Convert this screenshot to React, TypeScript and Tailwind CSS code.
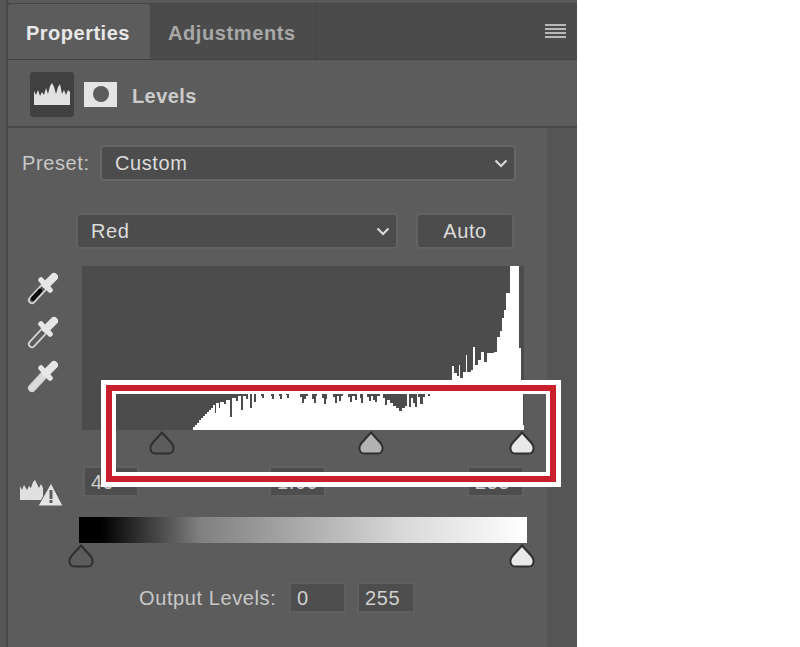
import React from 'react';

// histogram top edge as [x, y] steps, in panel pixels
const edge: [number, number][] = [
  [191, 430], [193, 427], [195, 425], [197, 423], [199, 420], [201, 418], [203, 416], [205, 414], [207, 412], [209, 410],
  [211, 408], [213, 405], [215, 413], [216, 403], [219, 408], [220, 402], [224, 404], [226, 400], [230, 417], [232, 398],
  [236, 401], [238, 396], [241, 410], [243, 396], [246, 399], [248, 394], [250, 408], [252, 394], [254, 402], [256, 392],
  [261, 396], [262, 398], [264, 390], [271, 396], [272, 399], [274, 390], [279, 396], [280, 399], [282, 390], [286, 395],
  [287, 398], [289, 390], [300, 397], [302, 403], [304, 399], [306, 396], [308, 390], [312, 399], [314, 403], [316, 396],
  [317, 390], [322, 398], [324, 404], [326, 399], [327, 390], [333, 397], [335, 403], [337, 396], [339, 401], [341, 396],
  [343, 390], [348, 397], [350, 402], [352, 396], [355, 400], [357, 390], [360, 398], [361, 403], [363, 390], [367, 397],
  [369, 401], [371, 396], [373, 400], [375, 402], [377, 396], [380, 390], [383, 398], [385, 405], [387, 400], [390, 403],
  [393, 406], [396, 408], [399, 411], [402, 408], [405, 406], [407, 394], [409, 407], [411, 398], [413, 403], [415, 407],
  [417, 394], [418, 397], [420, 404], [423, 397], [425, 394], [428, 396], [430, 390], [452, 366], [454, 373], [457, 376],
  [459, 365], [460, 378], [463, 372], [466, 355], [467, 372], [471, 370], [473, 347], [475, 365], [478, 360], [481, 352],
  [484, 362], [487, 353], [494, 352], [497, 337], [500, 331], [502, 318], [504, 310], [506, 293], [510, 266], [519, 348],
  [521, 394], [523, 425], [525, 430],
];

const histogramPath = () => {
  let d = 'M109 164';
  edge.forEach(([x, y], i) => {
    const next = i < edge.length - 1 ? edge[i + 1][0] : x;
    d += ` H${x - 82} V${y - 266} H${next - 82}`;
  });
  return d + ' V164 Z';
};

const Chevron = () => (
  <svg width="14" height="9" viewBox="0 0 14 9" className="shrink-0 mr-[1px]">
    <path d="M1.5 1.5 L7 7 L12.5 1.5" fill="none" stroke="#d8d8d8" strokeWidth="2.2" />
  </svg>
);

const Thumb = ({ fill, className }: { fill: string; className: string }) => (
  <svg width="26" height="24" viewBox="0 0 26 24" className={className}>
    <path
      d="M13 1.5 L22.5 12 Q25 15 24.5 18 Q24 22.5 19.5 22.5 H6.5 Q2 22.5 1.5 18 Q1 15 3.5 12 Z"
      fill={fill}
      stroke="#2f2f2f"
      strokeWidth="2"
    />
  </svg>
);

const Dropper = ({ tube, fill, body }: { tube: string; fill: string; body: string }) => (
  <svg width="32" height="34" viewBox="0 0 32 34">
    <path d="M6 28 L19 14" stroke="#d4d4d4" strokeWidth="8" strokeLinecap="round" />
    <path d="M6 28 L19 14" stroke={body} strokeWidth="4.5" strokeLinecap="round" />
    <path d="M7 26.5 L14 19" stroke={tube} strokeWidth={fill} strokeLinecap="round" />
    <path d="M20 13 L28 5" stroke="#e6e6e6" strokeWidth="8" strokeLinecap="round" />
    <path d="M15 8 L24 18" stroke="#e6e6e6" strokeWidth="5.5" strokeLinecap="round" />
  </svg>
);

const NumberBox = ({ value, className }: { value: string; className: string }) => (
  <div className={`h-[31px] bg-[#4d4d4d] border-2 border-[#606060] flex items-center pl-[6px] text-[20px] tracking-[0.6px] text-[#d0d0d0] ${className}`}>
    {value}
  </div>
);

export default function App() {
  return (
    <div className="relative w-[800px] h-[647px] bg-white flex font-['Liberation_Sans',Arial,sans-serif] overflow-hidden">
      <div className="w-[577px] h-full flex bg-[#5c5c5c]">
        <div className="w-[8px] bg-[#565656] border-r-2 border-[#474747]" />

        <div className="flex-1 flex flex-col min-w-0">
          <div className="h-[4px] bg-[#5a5a5a] border-b border-[#464646]" />

          {/* tabs */}
          <div className="h-[56px] bg-[#4b4b4b] border-b border-[#424242] flex items-stretch">
            <div className="w-[142px] bg-[#5c5c5c] rounded-t-[3px] flex items-center pl-[18px] pt-[2px] text-[20px] font-bold tracking-[0.5px] text-[#e8e8e8]">
              Properties
            </div>
            <div className="w-[167px] border-r border-[#434343] flex items-center pl-[18px] pt-[2px] text-[20px] font-bold tracking-[0.6px] text-[#a8a8a8]">
              Adjustments
            </div>
            <div className="flex-1 flex items-start justify-end pt-[20px] pr-[11px]">
              <div className="w-[21px] flex flex-col gap-[2px]">
                <div className="h-[2px] bg-[#b8b8b8]" />
                <div className="h-[2px] bg-[#b8b8b8]" />
                <div className="h-[2px] bg-[#b8b8b8]" />
                <div className="h-[2px] bg-[#b8b8b8]" />
              </div>
            </div>
          </div>

          {/* adjustment header */}
          <div className="h-[68px] border-b-2 border-[#494949] flex items-center pl-[22px] pt-[2px]">
            <div className="w-[44px] h-[45px] bg-[#404040] rounded-[3px] flex items-center justify-center">
              <svg width="38" height="24" viewBox="0 0 38 24">
                <path
                  d="M1 23 V9 L3 13 L5 8 L7 14 L9 10 L11 13 L13 6 L15 12 L17 4 L19 1 L21 5 L23 12 L25 5 L27 2 L29 12 L31 8 L33 13 L35 8 L37 10 V23 Z"
                  fill="#e2e2e2"
                />
              </svg>
            </div>
            <div className="ml-[10px] w-[33px] h-[25px] bg-[#e4e4e4] flex items-center justify-center">
              <div className="w-[16px] h-[16px] rounded-full bg-[#5c5c5c]" />
            </div>
            <span className="ml-[15px] pt-[3px] text-[20px] font-bold tracking-[0.4px] text-[#cccccc]">Levels</span>
          </div>

          <div className="flex-1 flex min-h-0">
            <div className="w-[539px] text-[#d4d4d4] text-[20px] tracking-[0.6px]">
              {/* preset */}
              <div className="mt-[17px] flex items-center pl-[14px]">
                <span className="w-[78px] text-[#c8c8c8]">Preset:</span>
                <div className="w-[416px] h-[36px] bg-[#4c4c4c] border-2 border-[#666666] rounded-[4px] flex items-center justify-between pl-[13px] pr-[5px] text-[#dcdcdc]">
                  <span>Custom</span>
                  <Chevron />
                </div>
              </div>

              {/* channel */}
              <div className="mt-[32px] flex items-center pl-[68px]">
                <div className="w-[322px] h-[36px] bg-[#4c4c4c] border-2 border-[#626262] rounded-[4px] flex items-center justify-between pl-[13px] pr-[5px] text-[#dcdcdc]">
                  <span>Red</span>
                  <Chevron />
                </div>
                <div className="ml-[18px] w-[98px] h-[36px] bg-[#4c4c4c] border-2 border-[#626262] rounded-[4px] flex items-center justify-center text-[#dcdcdc]">
                  Auto
                </div>
              </div>

              {/* histogram */}
              <div className="mt-[17px] flex pl-[18px]">
                <div className="w-[32px] pt-[6px] flex flex-col gap-[10px]">
                  <Dropper tube="#0a0a0a" fill="4.5" body="#5c5c5c" />
                  <Dropper tube="#6a6a6a" fill="0" body="#5c5c5c" />
                  <Dropper tube="#4a4a4a" fill="0" body="#dcdcdc" />
                </div>
                <div className="ml-[24px] w-[442px] h-[164px] bg-[#4c4c4c]">
                  <svg width="442" height="164" viewBox="0 0 442 164">
                    <path d={histogramPath()} fill="#ffffff" />
                  </svg>
                </div>
              </div>

              <div className="relative h-[36px]">
                <Thumb fill="#5c5c5c" className="absolute left-[141px] top-[1px]" />
                <Thumb fill="#b2b2b2" className="absolute left-[350px] top-[1px]" />
                <Thumb fill="#e8e8e8" className="absolute left-[501px] top-[1px]" />
              </div>

              {/* input levels */}
              <div className="h-[31px] flex items-start pl-[11px]">
                <svg width="45" height="27" viewBox="0 0 45 27" className="mt-[14px] shrink-0">
                  <path d="M1 20 V6 L3 10 L5 5 L8 10 L10 6 L12 8 L14 2 L16 0 L18 4 L20 8 L22 4 L24 8 V20 Z" fill="#e0e0e0" />
                  <path d="M32 3 L44 26 H19 Z" fill="#e4e4e4" stroke="#5c5c5c" strokeWidth="1" />
                  <rect x="30.5" y="10" width="3" height="9" fill="#5c5c5c" />
                  <rect x="30.5" y="20" width="3" height="3" fill="#5c5c5c" />
                </svg>
                <NumberBox value="49" className="ml-[19px] w-[56px]" />
                <NumberBox value="1.00" className="ml-[130px] w-[57px]" />
                <NumberBox value="255" className="ml-[141px] w-[57px]" />
              </div>

              {/* output */}
              <div className="mt-[20px] ml-[71px] w-[448px] h-[26px] bg-[linear-gradient(90deg,#000_5%,#555_20%,#808080_27%,#ababab_50%,#d8d8d8_72%,#fff_100%)]" />
              <div className="relative h-[39px]">
                <Thumb fill="#5c5c5c" className="absolute left-[60px] top-[1px]" />
                <Thumb fill="#e8e8e8" className="absolute left-[501px] top-[1px]" />
              </div>
              <div className="flex items-center pl-[131px]">
                <span className="w-[150px] text-[#c8c8c8]">Output Levels:</span>
                <NumberBox value="0" className="w-[57px]" />
                <NumberBox value="255" className="ml-[11px] w-[58px]" />
              </div>
            </div>
            <div className="flex-1 bg-[#555555]" />
          </div>
        </div>
      </div>

      {/* callout frame laid over the sliders */}
      <div className="absolute left-[101px] top-[380px] w-[460px] h-[107px] border-[5px] border-white">
        <div className="w-full h-full border-[6px] border-[#c8202c]">
          <div className="w-full h-full border-x-[4px] border-t-[3px] border-b-[4px] border-white" />
        </div>
      </div>
    </div>
  );
}
